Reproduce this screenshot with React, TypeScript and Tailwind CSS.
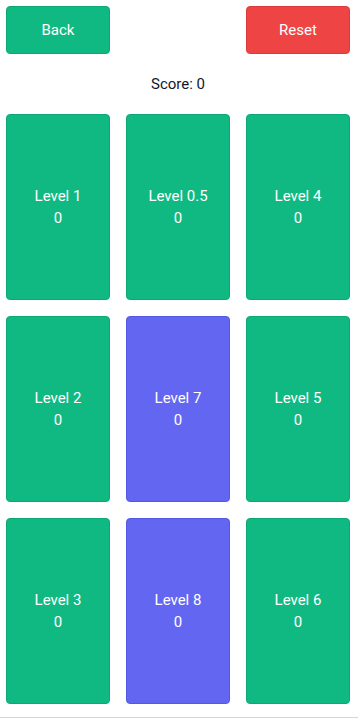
const levels = [
  { name: "Level 1", value: 0, color: "green" },
  { name: "Level 0.5", value: 0, color: "green" },
  { name: "Level 4", value: 0, color: "green" },
  { name: "Level 2", value: 0, color: "green" },
  { name: "Level 7", value: 0, color: "indigo" },
  { name: "Level 5", value: 0, color: "green" },
  { name: "Level 3", value: 0, color: "green" },
  { name: "Level 8", value: 0, color: "indigo" },
  { name: "Level 6", value: 0, color: "green" },
];

export default function App() {
  return (
    <div
      className="h-[718px] w-full overflow-hidden border-b border-gray-300 bg-white pl-[6px] pr-[8px] pt-[6px]"
      style={{ fontFamily: "Roboto, 'Noto Sans', sans-serif" }}
    >
      <div className="flex h-12 justify-between">
        <button className="w-[104px] rounded border border-[#0ea875] bg-[#10b981] text-[15px] text-white">
          Back
        </button>
        <button className="w-[104px] rounded border border-[#dc3b3b] bg-[#ef4444] text-[15px] text-white">
          Reset
        </button>
      </div>
      <div className="flex h-[60px] items-center justify-center text-[15px] text-gray-900">
        Score: 0
      </div>
      <div className="grid grid-cols-[104px_104px_104px] grid-rows-[186px_186px_186px] justify-between gap-y-4">
        {levels.map((l) => (
          <div
            key={l.name}
            className={
              l.color === "indigo"
                ? "flex flex-col items-center justify-center rounded border border-[#5558e0] bg-[#6366f1] text-[15px] leading-[22px] text-white"
                : "flex flex-col items-center justify-center rounded border border-[#0ea875] bg-[#10b981] text-[15px] leading-[22px] text-white"
            }
          >
            <span>{l.name}</span>
            <span>{l.value}</span>
          </div>
        ))}
      </div>
    </div>
  );
}
